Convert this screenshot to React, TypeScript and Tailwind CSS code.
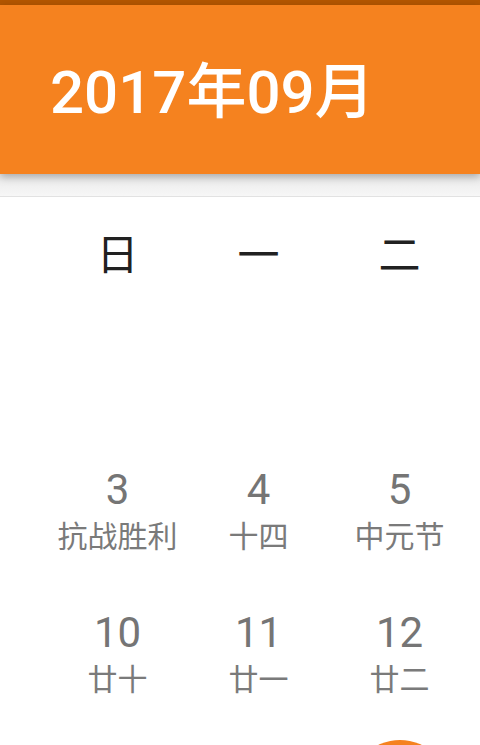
import React from 'react';

type Day = { num: number; lunar: string } | null;

const WEEK = ['日', '一', '二', '三', '四', '五', '六'];

const LUNAR: Record<number, string> = {
  1: '十一', 2: '十二', 3: '抗战胜利', 4: '十四', 5: '中元节', 6: '十六', 7: '白露',
  8: '十八', 9: '十九', 10: '廿十', 11: '廿一', 12: '廿二', 13: '廿三', 14: '廿四',
  15: '廿五', 16: '廿六', 17: '廿七', 18: '廿八', 19: '廿九', 20: '八月', 21: '初二',
  22: '初三', 23: '秋分', 24: '初五', 25: '初六', 26: '初七', 27: '初八', 28: '初九',
  29: '初十', 30: '十一',
};

// Sept 2017 starts on a Friday
function buildWeeks(): Day[][] {
  const cells: Day[] = [];
  for (let i = 0; i < 5; i++) cells.push(null);
  for (let d = 1; d <= 30; d++) cells.push({ num: d, lunar: LUNAR[d] });
  while (cells.length % 7) cells.push(null);
  const weeks: Day[][] = [];
  for (let i = 0; i < cells.length; i += 7) weeks.push(cells.slice(i, i + 7));
  return weeks;
}

const TODAY = 19;

function DayCell({ day }: { day: Day }) {
  if (!day) return <div className="w-[141px] shrink-0" />;
  const today = day.num === TODAY;
  return (
    <div className="w-[141px] shrink-0 flex flex-col items-center pt-[8px] relative">
      {today && (
        <div className="absolute top-[-4px] left-1/2 -translate-x-1/2 w-[100px] h-[100px] rounded-full bg-[#f5821f]" />
      )}
      <div className={`relative h-[48px] leading-[48px] text-[42px] ${today ? 'text-white' : 'text-[#757575]'}`}>
        {day.num}
      </div>
      <div className={`relative mt-[5px] h-[36px] leading-[36px] text-[30px] whitespace-nowrap ${today ? 'text-white' : 'text-[#7a7a7a]'}`}>
        {day.lunar}
      </div>
    </div>
  );
}

export default function App() {
  const weeks = buildWeeks();
  return (
    <div
      className="w-[480px] h-[745px] overflow-hidden bg-white"
      style={{ fontFamily: 'Roboto, "Noto Sans CJK SC", sans-serif' }}
    >
      <div className="h-[5px] bg-[#b35600]" />
      <header className="relative z-10 h-[169px] bg-[#f5821f] flex items-center pl-[50px] pt-[6px] shadow-[0_3px_8px_rgba(0,0,0,0.28)]">
        <h1 className="text-white text-[60px] font-medium leading-none">2017年09月</h1>
      </header>
      <div className="h-[23px] bg-gradient-to-b from-[#e9e9e9] to-[#f7f7f7] border-b border-[#e2e2e2]" />

      <div className="pl-[47px] w-[1200px]">
        <div className="flex h-[118px] items-center">
          {WEEK.map(w => (
            <div key={w} className="w-[141px] shrink-0 text-center text-[42px] text-[#212121] leading-none">
              {w}
            </div>
          ))}
        </div>
        {weeks.map((wk, i) => (
          <div key={i} className="flex h-[143px]">
            {wk.map((d, j) => (
              <DayCell key={j} day={d} />
            ))}
          </div>
        ))}
      </div>
    </div>
  );
}
